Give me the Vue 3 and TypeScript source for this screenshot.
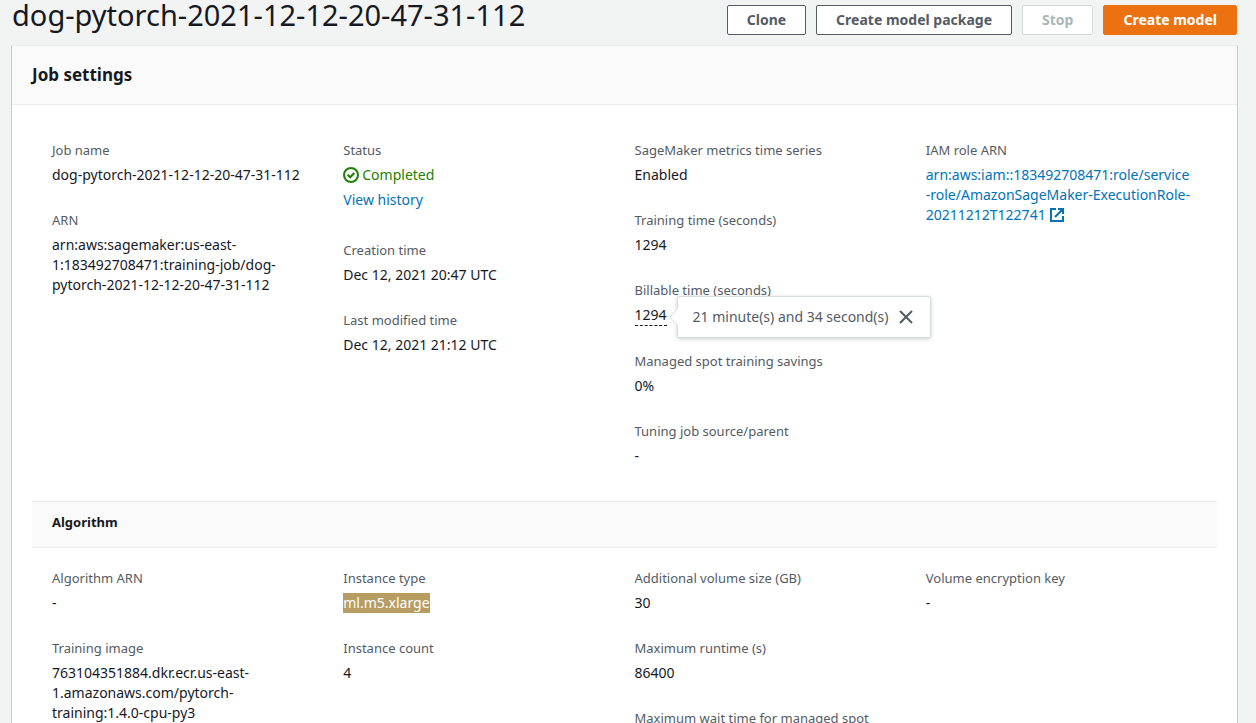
<script setup lang="ts">
import { ref } from 'vue'

type Kind = 'text' | 'status' | 'popover' | 'external' | 'selected'

interface Field {
  label: string
  value?: string
  kind?: Kind
  link?: string
}

const jobName = 'dog-pytorch-2021-12-12-20-47-31-112'
const popoverOpen = ref(true)

const jobColumns: Field[][] = [
  [
    { label: 'Job name', value: jobName },
    {
      label: 'ARN',
      value: 'arn:aws:sagemaker:us-east-\n1:183492708471:training-job/dog-\npytorch-2021-12-12-20-47-31-112',
    },
  ],
  [
    { label: 'Status', value: 'Completed', kind: 'status', link: 'View history' },
    { label: 'Creation time', value: 'Dec 12, 2021 20:47 UTC' },
    { label: 'Last modified time', value: 'Dec 12, 2021 21:12 UTC' },
  ],
  [
    { label: 'SageMaker metrics time series', value: 'Enabled' },
    { label: 'Training time (seconds)', value: '1294' },
    { label: 'Billable time (seconds)', value: '1294', kind: 'popover' },
    { label: 'Managed spot training savings', value: '0%' },
    { label: 'Tuning job source/parent', value: '-' },
  ],
  [
    {
      label: 'IAM role ARN',
      value: 'arn:aws:iam::183492708471:role/service\n-role/AmazonSageMaker-ExecutionRole-\n20211212T122741',
      kind: 'external',
    },
  ],
]

const algorithmColumns: Field[][] = [
  [
    { label: 'Algorithm ARN', value: '-' },
    {
      label: 'Training image',
      value: '763104351884.dkr.ecr.us-east-\n1.amazonaws.com/pytorch-\ntraining:1.4.0-cpu-py3',
    },
  ],
  [
    { label: 'Instance type', value: 'ml.m5.xlarge', kind: 'selected' },
    { label: 'Instance count', value: '4' },
  ],
  [
    { label: 'Additional volume size (GB)', value: '30' },
    { label: 'Maximum runtime (s)', value: '86400' },
    { label: 'Maximum wait time for managed spot' },
  ],
  [{ label: 'Volume encryption key', value: '-' }],
]

const sections = [
  { title: '', columns: jobColumns },
  { title: 'Algorithm', columns: algorithmColumns },
]
</script>

<template>
  <main class="page">
    <header class="page-header">
      <h1>{{ jobName }}</h1>
      <div class="actions">
        <button type="button" class="btn">Clone</button>
        <button type="button" class="btn">Create model package</button>
        <button type="button" class="btn" disabled>Stop</button>
        <button type="button" class="btn primary">Create model</button>
      </div>
    </header>

    <section class="panel">
      <h2>Job settings</h2>
      <div class="panel-body">
        <section v-for="section in sections" :key="section.title" class="section">
          <h3 v-if="section.title">{{ section.title }}</h3>
          <div class="columns">
            <dl v-for="(column, index) in section.columns" :key="index" class="column">
              <div v-for="field in column" :key="field.label" class="field">
                <dt>{{ field.label }}</dt>
                <dd v-if="field.kind === 'status'" class="status">
                  <svg viewBox="0 0 16 16" aria-hidden="true">
                    <circle cx="8" cy="8" r="7" />
                    <path d="M4.500 7.800 7.200 10.300 11.300 6" />
                  </svg>
                  <span>{{ field.value }}</span>
                </dd>
                <dd v-else-if="field.kind === 'popover'" class="popover-anchor">
                  <button type="button" class="trigger" @click="popoverOpen = !popoverOpen">{{ field.value }}</button>
                  <div v-if="popoverOpen" class="popover" role="dialog" aria-label="Billable time">
                    <svg class="arrow" viewBox="0 0 9 18" aria-hidden="true">
                      <path class="arrow-fill" d="M9 0 1 9 9 18Z" />
                      <path class="arrow-line" d="M8.500.500.800 9l7.700 8.500" />
                    </svg>
                    <span>21 minute(s) and 34 second(s)</span>
                    <button type="button" class="close" aria-label="Close" @click="popoverOpen = false">
                      <svg viewBox="0 0 16 16" aria-hidden="true"><path d="m2 2 12 12M14 2 2 14" /></svg>
                    </button>
                  </div>
                </dd>
                <dd v-else-if="field.kind === 'external'">
                  <a href="#role">{{ field.value }} <svg class="external" viewBox="0 0 16 16" aria-hidden="true">
                    <path d="M7 2H2v12h12V9M9 2h5v5M14 2 6 10" />
                  </svg></a>
                </dd>
                <dd v-else-if="field.kind === 'selected'"><mark>{{ field.value }}</mark></dd>
                <dd v-else-if="field.value">{{ field.value }}</dd>
                <dd v-if="field.link" class="link-row"><a href="#history">{{ field.link }}</a></dd>
              </div>
            </dl>
          </div>
        </section>
      </div>
    </section>
  </main>
</template>

<style>
body {
  margin: 0;
  background: #f2f3f3;
}
</style>

<style scoped>
.page {
  padding: 0 18px 0 11px;
  color: #16191f;
  font-family: "Noto Sans", "Open Sans", sans-serif;
  font-size: 14px;
  line-height: 20px;
}

.page-header {
  display: flex;
  justify-content: space-between;
  align-items: flex-start;
  height: 45px;
}

h1,
h2,
h3,
dl,
dd {
  margin: 0;
}

h1 {
  padding-left: 1px;
  font-size: 29px;
  font-weight: 400;
  line-height: 30px;
  white-space: nowrap;
}

.actions {
  display: flex;
  gap: 10px;
  padding: 5px 1px 0 0;
}

button {
  font-family: inherit;
  cursor: pointer;
}

.btn {
  height: 30px;
  padding: 0 19px;
  border: 1px solid #545b64;
  border-radius: 2px;
  background: #fff;
  color: #545b64;
  font-size: 14px;
  font-weight: 700;
  line-height: 20px;
  white-space: nowrap;
}

.btn:disabled {
  border-color: #d5dbdb;
  color: #aab7b8;
  cursor: default;
}

.btn.primary {
  border-color: #ec7211;
  background: #ec7211;
  color: #fff;
}

.panel {
  border: 1px solid #c5cbcb;
  border-top-color: #eaeded;
  border-bottom: 0;
  background: #fff;
}

h2 {
  padding: 19px 20px;
  border-bottom: 1px solid #eaeded;
  background: #fafafa;
  font-size: 17px;
  font-weight: 700;
  line-height: 20px;
}

.panel-body {
  padding: 35px 20px 0;
}

.section + .section {
  margin-top: 35px;
}

h3 {
  margin-bottom: 20px;
  padding: 10px 20px 15px;
  border-top: 1px solid #eaeded;
  border-bottom: 1px solid #eaeded;
  background: #fafafa;
  font-size: 13px;
  font-weight: 700;
  line-height: 20px;
}

.columns {
  display: grid;
  grid-template-columns: repeat(4, minmax(0, 1fr));
  padding-left: 20px;
}

.column {
  display: flex;
  flex-direction: column;
  gap: 25px;
}

dt {
  color: #545b64;
  font-size: 13px;
}

dd {
  margin-top: 5px;
  white-space: pre-line;
}

.link-row {
  margin-bottom: 5px;
}

a {
  color: #0073bb;
  text-decoration: none;
}

.status {
  display: flex;
  align-items: center;
  gap: 3px;
  color: #1d8102;
}

svg {
  fill: none;
  stroke: currentColor;
  stroke-width: 2;
}

.status svg {
  width: 16px;
  height: 16px;
}

.external {
  width: 16px;
  height: 16px;
  vertical-align: -3px;
}

mark {
  display: inline-block;
  background: #b89d62;
  color: #fff;
}

.popover-anchor {
  display: flex;
  position: relative;
  width: max-content;
}

.trigger {
  padding: 0;
  border: 0;
  border-bottom: 1px dashed #16191f;
  background: none;
  color: inherit;
  font-size: 14px;
  line-height: 20px;
}

.popover {
  display: flex;
  position: absolute;
  top: -9px;
  left: 100%;
  align-items: center;
  gap: 10px;
  margin-left: 10px;
  padding: 10px 16px 10px 15px;
  border: 1px solid #d5dbdb;
  border-radius: 2px;
  background: #fff;
  box-shadow: 0 1px 4px rgba(0, 28, 36, 0.2);
  color: #545b64;
  white-space: nowrap;
}

.arrow {
  position: absolute;
  top: 11px;
  left: -9px;
  width: 9px;
  height: 18px;
}

.arrow-fill {
  fill: #fff;
  stroke: none;
}

.arrow-line {
  stroke: #d5dbdb;
  stroke-width: 1;
}

.close {
  display: flex;
  padding: 0;
  border: 0;
  background: none;
  color: #545b64;
}

.close svg {
  width: 16px;
  height: 16px;
}
</style>
